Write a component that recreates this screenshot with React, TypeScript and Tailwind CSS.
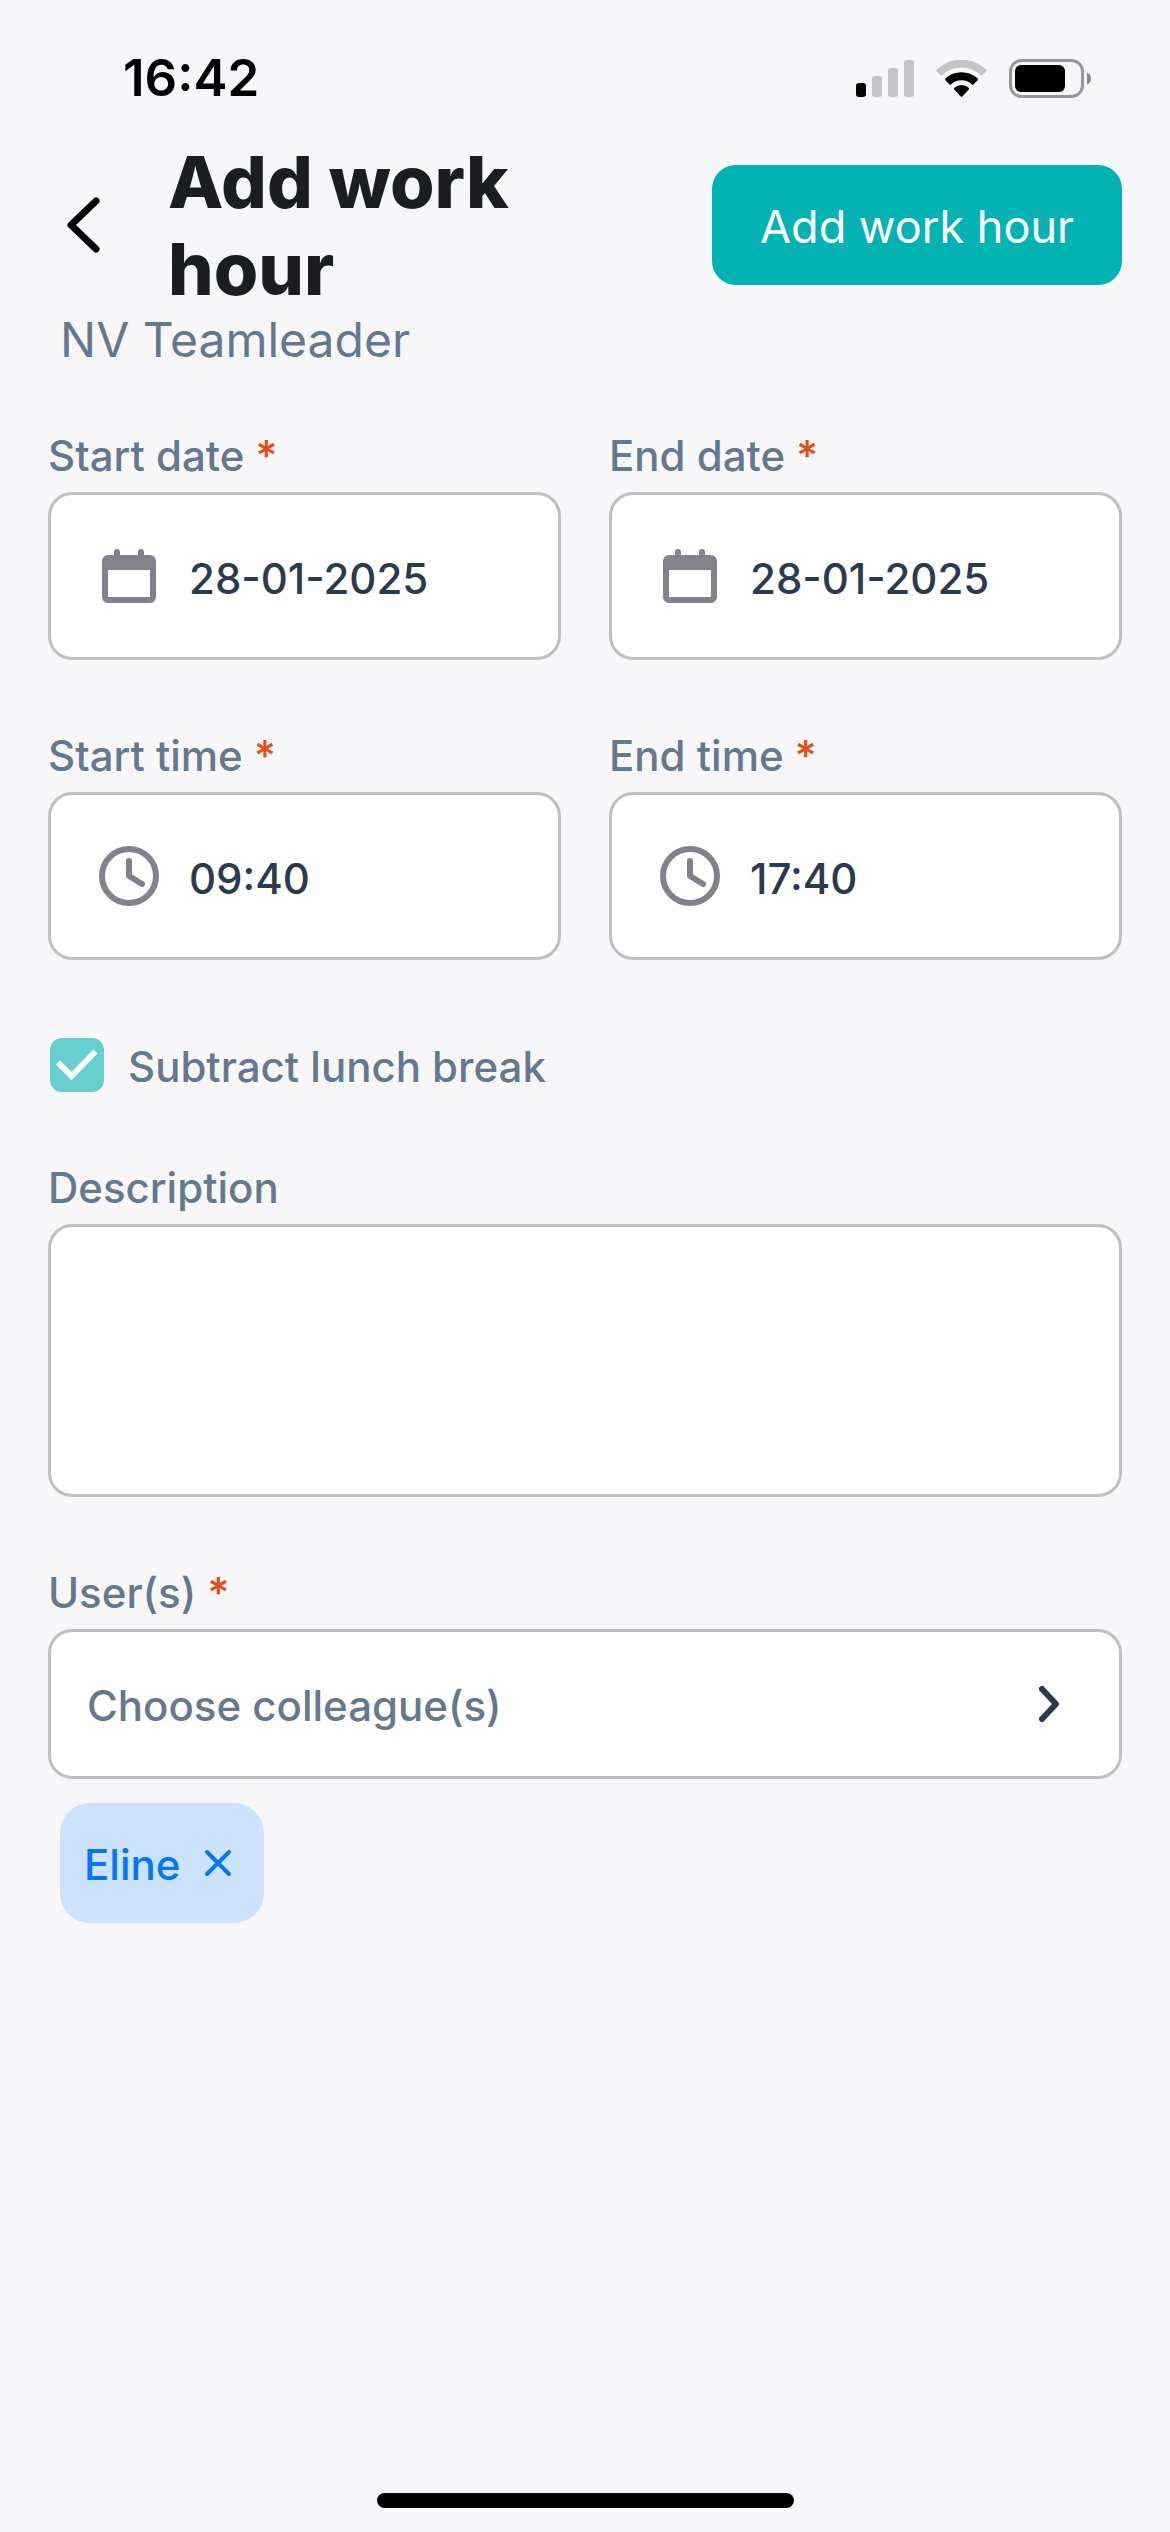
import { useState, type ReactNode } from "react";

function SignalIcon() {
  return (
    <svg className="h-[37px] w-[58px]" viewBox="0 0 58 37" aria-hidden="true">
      <rect x="0" y="23" width="10" height="14" rx="3" fill="#000" />
      <rect x="16" y="16" width="10" height="21" rx="3" fill="#c5c5c7" />
      <rect x="32" y="8" width="10" height="29" rx="3" fill="#c5c5c7" />
      <rect x="48" y="0" width="10" height="37" rx="3" fill="#c5c5c7" />
    </svg>
  );
}

function WifiIcon() {
  return (
    <svg className="h-[37px] w-[51px]" viewBox="0 0 51 37" aria-hidden="true">
      <path d="M0.6 9.6A36 36 0 0 1 50.4 9.6Q51 10.4 50.4 11.2L46.3 15.3Q45.5 15.9 44.8 15.3A28 28 0 0 0 6.2 15.3Q5.5 15.9 4.7 15.3L0.6 11.2Q0 10.4 0.6 9.6Z" fill="#c5c5c7" />
      <path d="M9.4 18.6A23.5 23.5 0 0 1 41.6 18.6Q42.2 19.4 41.6 20.2L37.4 24.4Q36.7 25 36 24.4A15.4 15.4 0 0 0 15 24.4Q14.3 25 13.6 24.4L9.4 20.2Q8.8 19.4 9.4 18.6Z" fill="#000" />
      <path d="M18.3 27.8A11 11 0 0 1 32.7 27.8Q33.3 28.7 32.7 29.5L26.3 36.4Q25.5 37.2 24.7 36.4L18.3 29.5Q17.7 28.7 18.3 27.8Z" fill="#000" />
    </svg>
  );
}

function BatteryIcon() {
  return (
    <svg className="h-[39px] w-[82px]" viewBox="0 0 82 39" aria-hidden="true">
      <rect x="1.5" y="1.5" width="72" height="36" rx="11" fill="none" stroke="#97979a" strokeWidth="3" />
      <rect x="6" y="6" width="50" height="27" rx="6" fill="#000" />
      <path d="M78 13.5Q82 15.5 82 19.5Q82 23.5 78 25.5Z" fill="#8a8a8c" />
    </svg>
  );
}

function CalendarIcon() {
  return (
    <svg className="h-[60px] w-[60px] shrink-0" viewBox="0 0 60 60" aria-hidden="true">
      <path
        fillRule="evenodd"
        fill="#82818c"
        d="M15 9V6a3 3 0 0 1 6 0V9H39V6a3 3 0 0 1 6 0V9H51a6 6 0 0 1 6 6V51a6 6 0 0 1-6 6H9a6 6 0 0 1-6-6V15a6 6 0 0 1 6-6ZM9 24V51H51V24Z"
      />
    </svg>
  );
}

function ClockIcon() {
  return (
    <svg className="h-[60px] w-[60px] shrink-0" viewBox="0 0 60 60" fill="none" stroke="#82818c" strokeWidth="6" strokeLinecap="round" strokeLinejoin="round" aria-hidden="true">
      <circle cx="30" cy="30" r="27" />
      <path d="M30 15V30L43 38" />
    </svg>
  );
}

function Label({ htmlFor, required, children }: { htmlFor: string; required?: boolean; children: ReactNode }) {
  return (
    <label htmlFor={htmlFor} className="block pb-3 text-[42px] leading-12 font-[450] text-[#64788f]">
      {children}
      {required && <span className="text-[#ea4a14]"> *</span>}
    </label>
  );
}

function PickerField({ id, label, icon, initial }: { id: string; label: string; icon: ReactNode; initial: string }) {
  const [value, setValue] = useState(initial);
  return (
    <div className="min-w-0">
      <Label htmlFor={id} required>{label}</Label>
      <div className="flex h-[168px] items-center gap-[30px] rounded-3xl border-3 border-[#bfbfc4] bg-white px-12">
        {icon}
        <input
          id={id}
          value={value}
          onChange={(e) => setValue(e.target.value)}
          className="w-full min-w-0 bg-transparent pt-1.5 text-[42px] leading-12 font-[450] text-[#2a3b4f] outline-none"
        />
      </div>
    </div>
  );
}

export default function App() {
  const [lunch, setLunch] = useState(true);
  const [users, setUsers] = useState(["Eline"]);

  return (
    <div className="flex min-h-screen flex-col bg-[#f7f7fa] font-['Inter',sans-serif]">
      <div className="flex h-[138px] items-center justify-between pt-[18px] pr-[79px] pl-[123px]">
        <span className="text-[51px] leading-14 font-semibold text-black">16:42</span>
        <div className="flex items-center gap-[22px]">
          <SignalIcon />
          <WifiIcon />
          <BatteryIcon />
        </div>
      </div>

      <header className="px-12">
        <div className="flex items-center">
          <button type="button" aria-label="Back" className="flex w-[120px] shrink-0 pl-[18px]">
            <svg className="h-[58px] w-9" viewBox="0 0 36 58" fill="none" stroke="#000" strokeWidth="7" strokeLinecap="round" strokeLinejoin="round" aria-hidden="true">
              <path d="M30 5L5 29L30 53" />
            </svg>
          </button>
          <h1 className="min-w-0 flex-1 pr-12 text-[72px] leading-[87px] font-extrabold text-[#1c1d20]">Add work hour</h1>
          <button type="submit" form="work-hour" className="h-[120px] shrink-0 rounded-3xl bg-[#02b3b4] px-12 pt-1 text-[45px] leading-14 text-white">
            Add work hour
          </button>
        </div>
        <p className="pl-3 text-[48px] leading-14 text-[#64788f]">NV Teamleader</p>
      </header>

      <form id="work-hour" className="flex-1 px-12 pt-16" onSubmit={(e) => e.preventDefault()}>
        <div className="grid grid-cols-2 gap-x-12 gap-y-18">
          <PickerField id="start-date" label="Start date" icon={<CalendarIcon />} initial="28-01-2025" />
          <PickerField id="end-date" label="End date" icon={<CalendarIcon />} initial="28-01-2025" />
          <PickerField id="start-time" label="Start time" icon={<ClockIcon />} initial="09:40" />
          <PickerField id="end-time" label="End time" icon={<ClockIcon />} initial="17:40" />
        </div>

        <div className="mt-[78px] flex items-center gap-6">
          <span className="grid pl-0.5">
            <input
              id="lunch"
              type="checkbox"
              checked={lunch}
              onChange={(e) => setLunch(e.target.checked)}
              className="col-start-1 row-start-1 h-[54px] w-[54px] appearance-none rounded-xl border-3 border-[#66cfd0] bg-white checked:bg-[#66cfd0]"
            />
            {lunch && (
              <svg className="pointer-events-none col-start-1 row-start-1 h-[54px] w-[54px]" viewBox="0 0 54 54" fill="none" stroke="#fff" strokeWidth="6" aria-hidden="true">
                <path d="M8 24.5L21.5 38L45.5 13.5" />
              </svg>
            )}
          </span>
          <label htmlFor="lunch" className="pt-1 text-[42px] leading-12 font-[450] text-[#64788f]">Subtract lunch break</label>
        </div>

        <div className="mt-18">
          <Label htmlFor="description">Description</Label>
          <textarea id="description" className="block h-[273px] w-full resize-none rounded-3xl border-3 border-[#bfbfc4] bg-white p-9 text-[42px] leading-12 font-[450] text-[#2a3b4f] outline-none" />
        </div>

        <div className="mt-18">
          <Label htmlFor="users" required>User(s)</Label>
          <button id="users" type="button" className="flex h-[150px] w-full items-center justify-between rounded-3xl border-3 border-[#bfbfc4] bg-white pr-[57px] pl-9 text-left text-[42px] leading-12 font-[450] text-[#64788f]">
            <span className="pt-1">Choose colleague(s)</span>
            <svg className="h-9 w-6" viewBox="0 0 24 36" fill="none" stroke="#2a3b4f" strokeWidth="6" strokeLinecap="round" strokeLinejoin="round" aria-hidden="true">
              <path d="M4 3L18 18L4 33" />
            </svg>
          </button>
          <ul className="flex flex-wrap gap-6 px-3 pt-6">
            {users.map((name) => (
              <li key={name} className="flex h-[120px] items-center gap-6 rounded-[30px] bg-[#cce3ff] pr-8 pl-6 text-[42px] leading-12 font-[450] text-[#0675f8]">
                <span className="pt-1">{name}</span>
                <button type="button" aria-label={`Remove ${name}`} onClick={() => setUsers(users.filter((u) => u !== name))}>
                  <svg className="h-7 w-7" viewBox="0 0 28 28" fill="none" stroke="currentColor" strokeWidth="4" strokeLinecap="round" aria-hidden="true">
                    <path d="M3 3L25 25M25 3L3 25" />
                  </svg>
                </button>
              </li>
            ))}
          </ul>
        </div>
      </form>

      <div className="flex justify-center pb-6">
        <div className="h-[15px] w-[417px] rounded-full bg-black" />
      </div>
    </div>
  );
}
